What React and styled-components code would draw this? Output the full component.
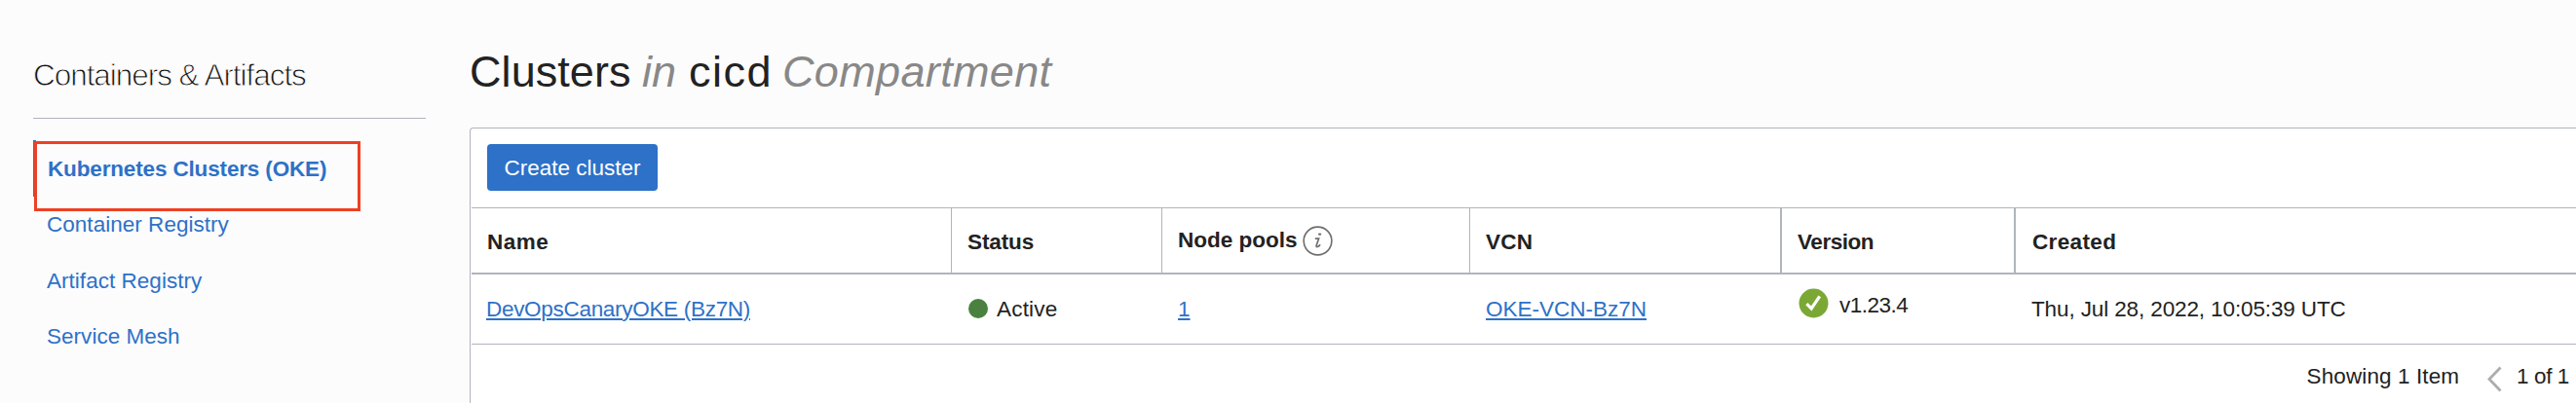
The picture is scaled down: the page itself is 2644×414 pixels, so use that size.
import React from "react";
import styled, { createGlobalStyle } from "styled-components";

const Global = createGlobalStyle`
  * { box-sizing: border-box; }
  body {
    margin: 0;
    background: #fcfcfc;
    color: #222;
    font-family: "Liberation Sans", Arial, sans-serif;
    font-size: 22.5px;
    white-space: nowrap;
    overflow: hidden;
  }
`;

const Page = styled.div`
  display: flex;
  height: 414px;
  width: 2644px;
  overflow: hidden;
`;

const Sidebar = styled.aside`
  width: 437px;
  padding-left: 34px;
  flex: none;
`;

const SidebarTitle = styled.h2`
  display: flex;
  align-items: center;
  height: 122px;
  margin: 0 0 22px;
  padding-top: 33px;
  border-bottom: 1px solid #b0b4bb;
  font-size: 31.5px;
  font-weight: 400;
  letter-spacing: -1.05px;
  color: #111;
  -webkit-text-stroke: 0.9px #fcfcfc;
`;

const Nav = styled.nav`
  display: flex;
  flex-direction: column;
  position: relative;
`;

const NavItem = styled.a`
  display: flex;
  align-items: center;
  height: 57.5px;
  padding-top: 2px;
  padding-left: ${(p) => (p.$active ? 12 : 14)}px;
  border-left: ${(p) => (p.$active ? "3px solid #2d71c8" : "0")};
  color: #2d71c8;
  font-weight: ${(p) => (p.$active ? 700 : 400)};
  letter-spacing: ${(p) => (p.$active ? -0.15 : 0.03)}px;
`;

const Highlight = styled.div`
  position: absolute;
  left: 1px;
  top: 1px;
  width: 335px;
  height: 72px;
  border: 3px solid #ee4023;
`;

const Main = styled.main`
  flex: 1;
  margin-left: 45px;
  min-width: 0;
`;

const Heading = styled.h1`
  display: flex;
  align-items: center;
  height: 131px;
  margin: 0;
  padding-top: 17px;
  font-size: 45px;
  font-weight: 400;
`;

const Word = styled.span`
  width: ${(p) => p.$w}px;
  letter-spacing: ${(p) => p.$ls || 0}px;
  color: ${(p) => (p.$muted ? "#888" : "#222")};
  font-style: ${(p) => (p.$muted ? "italic" : "normal")};
`;

const Panel = styled.section`
  height: 290px;
  border: 1px solid #b0b4bb;
  border-right: 0;
  border-radius: 4px 0 0 0;
  background: #fff;
  padding-left: 1px;
`;

const Toolbar = styled.div`
  height: 81px;
  padding: 16px 0 0 16px;
`;

const Button = styled.button`
  display: flex;
  align-items: center;
  justify-content: center;
  width: 175px;
  height: 48px;
  padding: 1px 0 0;
  border: 0;
  border-radius: 4px;
  background: #2d71c8;
  color: #fff;
  font: inherit;
`;

const Row = styled.div`
  display: grid;
  grid-template-columns: 493px 216px 316px 320px 240px 1fr;
  height: ${(p) => (p.$head ? 69 : 72)}px;
  border-top: ${(p) => (p.$head ? "1px solid #b0b4bb" : "0")};
  border-bottom: ${(p) => (p.$head ? 2 : 1)}px solid #b0b4bb;
`;

const Cell = styled.div`
  display: flex;
  align-items: center;
  padding: ${(p) => p.$drop || 0}px 0 ${(p) => p.$lift || 0}px ${(p) => p.$pad ?? 16}px;
  letter-spacing: ${(p) => p.$ls || 0}px;
`;

const HeadCell = styled(Cell)`
  font-weight: 700;
  border-right: ${(p) => p.$line || 0}px solid #b0b4bb;
`;

const Link = styled.a`
  color: #2d71c8;
  text-decoration: underline;
  text-decoration-thickness: 2px;
  text-underline-offset: 2px;
`;

const Dot = styled.span`
  width: 20px;
  height: 20px;
  margin: 0 9px 1px 1px;
  border-radius: 50%;
  background: #4a8141;
`;

const InfoSvg = styled.svg`
  margin: 2px 0 0 5px;
`;

const CheckSvg = styled.svg`
  margin: 0 11px 4px 1px;
`;

const Footer = styled.footer`
  display: flex;
  align-items: center;
  justify-content: flex-end;
  height: 65px;
  padding-right: 7px;
`;

const ChevronSvg = styled.svg`
  margin: 6px 15px 0 29px;
`;

const InfoIcon = () => (
  <InfoSvg width="31" height="31" viewBox="0 0 31 31" fill="none">
    <circle cx="15.5" cy="15.5" r="14.4" stroke="#6e6e6e" strokeWidth="1.6" />
    <ellipse cx="17.6" cy="8.6" rx="1.7" ry="1.2" fill="#6e6e6e" />
    <path d="M12.8 13.2H16.6L14.2 20Q13.7 21.9 15.3 21.5Q16.9 20.9 18 19.2" stroke="#6e6e6e" strokeWidth="1.7" />
  </InfoSvg>
);

const CheckIcon = () => (
  <CheckSvg width="31" height="31" viewBox="0 0 31 31" fill="none">
    <circle cx="15.5" cy="15.5" r="15" fill="#7ba835" />
    <path d="M8.4 16.2L13.2 21L21.7 8.3" stroke="#fff" strokeWidth="3.2" />
  </CheckSvg>
);

const Chevron = () => (
  <ChevronSvg width="15" height="27" viewBox="0 0 15 27" fill="none">
    <path d="M13.5 1.5L2 13.5L13.5 25.5" stroke="#adadad" strokeWidth="2.8" />
  </ChevronSvg>
);

export default function App() {
  return (
    <Page>
      <Global />
      <Sidebar>
        <SidebarTitle>Containers &amp; Artifacts</SidebarTitle>
        <Nav>
          <NavItem $active>Kubernetes Clusters (OKE)</NavItem>
          <NavItem>Container Registry</NavItem>
          <NavItem>Artifact Registry</NavItem>
          <NavItem>Service Mesh</NavItem>
          <Highlight />
        </Nav>
      </Sidebar>
      <Main>
        <Heading>
          <Word $w={177} $ls={0.07}>Clusters</Word>
          <Word $w={48} $muted>in</Word>
          <Word $w={96} $ls={1.5}>cicd</Word>
          <Word $w={280} $ls={0.35} $muted>Compartment</Word>
        </Heading>
        <Panel>
          <Toolbar>
            <Button>Create cluster</Button>
          </Toolbar>
          <Row $head>
            <HeadCell $line={1} $drop={3} $ls={0.5}>Name</HeadCell>
            <HeadCell $line={1} $drop={3} $ls={-0.1}>Status</HeadCell>
            <HeadCell $line={1} $lift={1}>Node pools<InfoIcon /></HeadCell>
            <HeadCell $line={2} $drop={3} $ls={0.2}>VCN</HeadCell>
            <HeadCell $line={2} $drop={3} $ls={-0.45}>Version</HeadCell>
            <HeadCell $drop={3} $pad={17} $ls={0.35}>Created</HeadCell>
          </Row>
          <Row>
            <Cell $pad={15} $ls={-0.3}><Link>DevOpsCanaryOKE (Bz7N)</Link></Cell>
            <Cell $ls={0.2}><Dot />Active</Cell>
            <Cell><Link>1</Link></Cell>
            <Cell><Link>OKE-VCN-Bz7N</Link></Cell>
            <Cell $lift={8} $ls={-0.5}><CheckIcon />v1.23.4</Cell>
            <Cell $ls={-0.12}>Thu, Jul 28, 2022, 10:05:39 UTC</Cell>
          </Row>
          <Footer>
            <Cell $ls={0.1}>Showing 1 Item</Cell>
            <Chevron />
            <Cell $pad={0} $ls={-0.4}>1 of 1</Cell>
          </Footer>
        </Panel>
      </Main>
    </Page>
  );
}
